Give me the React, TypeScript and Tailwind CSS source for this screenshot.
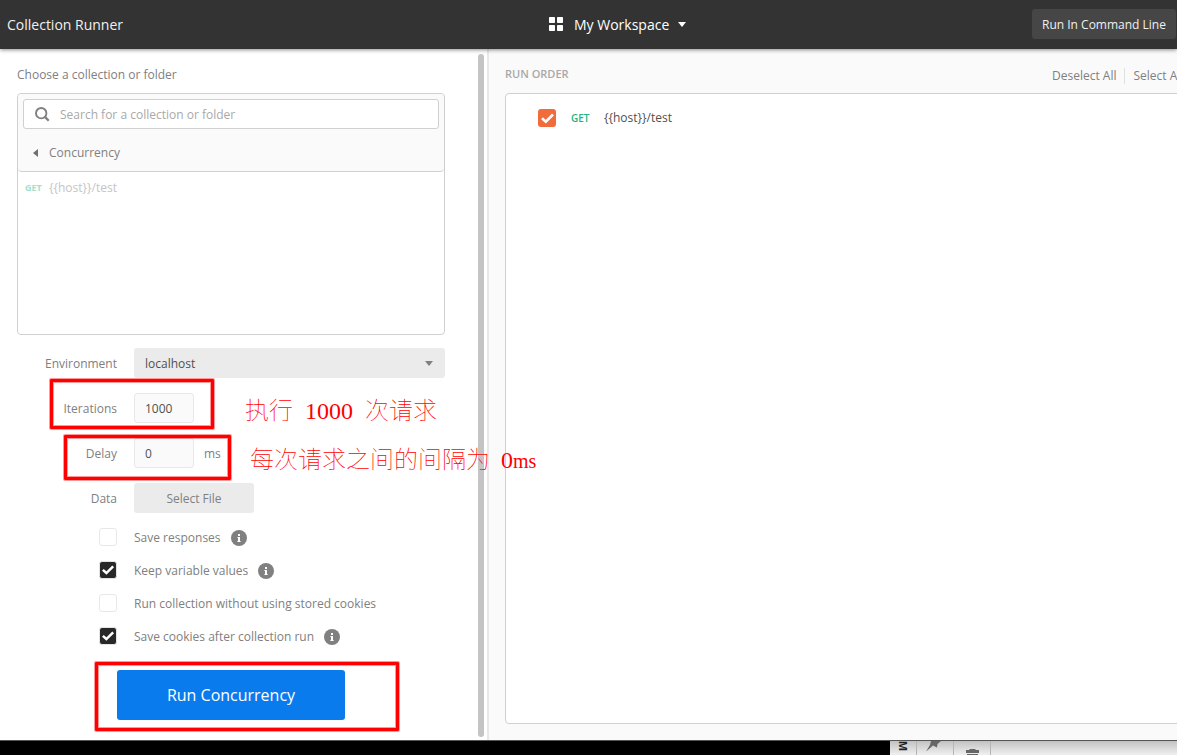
import React from "react";

function Check({ className }: { className: string }) {
  return (
    <svg viewBox="0 0 18 18" className={className} fill="none" stroke="currentColor" strokeWidth="2.8">
      <path d="M3.2 8.8 L7.2 12.4 L14.8 4.8" />
    </svg>
  );
}

function Info() {
  return (
    <svg viewBox="0 0 16 16" className="h-4 w-4 shrink-0">
      <circle cx="8" cy="8" r="8" fill="#808080" />
      <path d="M7 4h2v2H7zM6.4 7H9v4h.6v1H6.4v-1H7V8h-.6z" fill="#fff" />
    </svg>
  );
}

function Field({ label, children }: { label: string; children: React.ReactNode }) {
  return (
    <div className="flex h-[30px] items-center">
      <div className="mr-[17px] w-[100px] pt-[2px] text-right">{label}</div>
      {children}
    </div>
  );
}

function Option({ label, checked, info }: { label: string; checked?: boolean; info?: boolean }) {
  return (
    <div className="flex h-[33px] items-center">
      {checked ? (
        <div className="mb-[2px] flex h-[18px] w-[18px] items-center justify-center rounded-[3px] border border-[#e4e4e4] bg-[#282828] text-white">
          <Check className="h-4 w-4 shrink-0" />
        </div>
      ) : (
        <div className="mb-[2px] h-[18px] w-[18px] rounded-[3px] border border-[#e8e8e8] bg-white" />
      )}
      <div className="mr-[10px] ml-[17px] pt-px">{label}</div>
      {info && <div className="pt-px"><Info /></div>}
    </div>
  );
}

function Header() {
  return (
    <header className="relative z-10 flex h-[49px] shrink-0 items-center bg-[#333] text-[#f0f0f0] shadow-[0_1px_4px_rgba(0,0,0,0.45)]">
      <div className="w-[549px] pl-[7px] text-[14px]">Collection Runner</div>
      <svg viewBox="0 0 14 14" className="mb-px h-[14px] w-[14px]" fill="#fff">
        <rect width="6" height="6" rx=".7" />
        <rect x="8" width="6" height="6" rx=".7" />
        <rect y="8" width="6" height="6" rx=".7" />
        <rect x="8" y="8" width="6" height="6" rx=".7" />
      </svg>
      <div className="ml-[11px] w-[96px] text-[14px] whitespace-nowrap text-white">My Workspace</div>
      <svg viewBox="0 0 8 5" className="ml-[8px] h-[5px] w-[8px]" fill="#fff">
        <path d="M0 0h8L4 5z" />
      </svg>
      <button className="mr-px mb-px ml-auto h-[30px] w-[144px] rounded-[3px] bg-[#464646] pt-[2px] text-[12px] whitespace-nowrap">
        Run In Command Line
      </button>
    </header>
  );
}

function SetupPanel() {
  return (
    <section className="flex w-[489px] shrink-0 border-r-2 border-[#e8e8e8] bg-white">
      <div className="w-[478px]">
        <div className="pt-[17px] pl-[17px] leading-[18px]">Choose a collection or folder</div>
        <div className="mt-[9px] ml-[17px] h-[242px] w-[428px] rounded-[4px] border border-[#d0d0d0] bg-white">
          <div className="h-[78px] rounded-[4px] border-b border-[#d0d0d0] bg-[#fafafa] px-[5px] pt-[5px]">
            <div className="flex h-[30px] items-center rounded-[3px] border border-[#d0d0d0] bg-white pl-[11px] text-[#a9a9a9]">
              <svg viewBox="0 0 15 15" className="h-[15px] w-[15px]" fill="none" stroke="#808080" strokeWidth="1.9">
                <circle cx="6.2" cy="6.2" r="5.2" />
                <path d="M9.9 9.9l3.8 3.8" strokeWidth="2.3" />
              </svg>
              <span className="ml-[10px] pt-[2px]">Search for a collection or folder</span>
            </div>
            <div className="mt-[9px] flex h-[30px] items-center pl-[10px]">
              <svg viewBox="0 0 5 8" className="h-2 w-[5px]" fill="#707070">
                <path d="M5 0v8L0 4z" />
              </svg>
              <span className="ml-[11px]">Concurrency</span>
            </div>
          </div>
          <div className="flex h-[32px] items-center pl-[7px] text-[#c5c5c5]">
            <span className="w-[24px] text-[9px] font-bold text-[#a0e2ca]">GET</span>
            <span>{"{{host}}/test"}</span>
          </div>
        </div>
        <div className="flex flex-col gap-[15px] pt-[13px] pl-[17px]">
          <Field label="Environment">
            <div className="flex h-[30px] w-[311px] items-center justify-between rounded-[3px] bg-[#ebebeb] pr-[12px] pl-[11px] text-[#505050]">
              <span className="pt-[2px]">localhost</span>
              <svg viewBox="0 0 8 5" className="h-[5px] w-[8px]" fill="#808080">
                <path d="M0 0h8L4 5z" />
              </svg>
            </div>
          </Field>
          <Field label="Iterations">
            <div className="flex h-[30px] w-[60px] items-center rounded-[3px] border border-[#e8e8e8] bg-[#fafafa] pt-[2px] pl-[10px] text-[#505050]">1000</div>
          </Field>
          <Field label="Delay">
            <div className="flex h-[30px] w-[60px] items-center rounded-[3px] border border-[#e8e8e8] bg-[#fafafa] pt-[2px] pl-[10px] text-[#505050]">0</div>
            <span className="ml-[10px] pt-[2px]">ms</span>
          </Field>
          <Field label="Data">
            <button className="h-[30px] w-[120px] rounded-[3px] bg-[#ebebeb] pt-[2px]">Select File</button>
          </Field>
        </div>
        <div className="pt-[8px] pl-[99px]">
          <Option label="Save responses" info />
          <Option label="Keep variable values" checked info />
          <Option label="Run collection without using stored cookies" />
          <Option label="Save cookies after collection run" checked info />
        </div>
        <button className="mt-[17px] ml-[117px] h-[50px] w-[228px] rounded-[3px] bg-[#097bed] text-[16px] text-white">
          Run Concurrency
        </button>
      </div>
      <div className="mt-[5px] h-[683px] w-[6px] rounded-full bg-[#c4c4c4]" />
    </section>
  );
}

function OrderPanel() {
  return (
    <section className="min-w-0 flex-1 overflow-hidden bg-[#fafafa] pl-4">
      <div className="flex h-[44px] w-[720px] items-center">
        <span className="w-[547px] pt-[6px] text-[11px] font-semibold text-[#a9a9a9]">RUN ORDER</span>
        <span className="pt-[9px]">Deselect All</span>
        <span className="mt-[9px] mr-[8px] ml-[8px] h-4 w-px bg-[#e0e0e0]" />
        <span className="pt-[9px]">Select All</span>
      </div>
      <div className="h-[631px] w-[720px] rounded-[4px] border border-[#d0d0d0] bg-white pt-[9px]">
        <div className="flex h-[30px] items-center pl-[32px]">
          <div className="flex h-[18px] w-[18px] items-center justify-center rounded-[3px] bg-[#f26b3a] text-white">
            <Check className="h-[17px] w-[17px]" />
          </div>
          <span className="ml-[15px] w-[33px] pt-px text-[10px] font-semibold text-[#26b47f]">GET</span>
          <span className="text-[#505050]">{"{{host}}/test"}</span>
        </div>
      </div>
    </section>
  );
}

function BackgroundStrip() {
  return (
    <footer className="flex h-[15px] shrink-0 overflow-hidden border-t border-[#555] bg-black">
      <div className="w-[890px]" />
      <div className="flex flex-1 bg-linear-to-b from-[#c2c2c2] to-[#f0f0f0]">
        <div className="flex w-[27px] items-start justify-center border-r border-[#b5b5b5]">
          <span className="rotate-90 text-[11px] leading-[10px] font-bold text-[#222]">M</span>
        </div>
        <div className="w-[37px] border-r border-[#b5b5b5]">
          <svg viewBox="0 0 36 14" className="h-[14px] w-9" fill="#666">
            <path d="M14 0H24L20.5 3 20 6.5 16 4.5 9 10.5 13 4z" />
          </svg>
        </div>
        <div className="w-[37px] border-r border-[#b5b5b5]">
          <svg viewBox="0 0 36 14" className="h-[14px] w-9" fill="#666">
            <path d="M12 9h3l1-1h5l1 1h3v3H12zM13 13h11v1H13z" />
          </svg>
        </div>
      </div>
    </footer>
  );
}

function Annotations() {
  const text = "absolute z-20 whitespace-pre font-['Liberation_Serif','Noto_Sans_CJK_SC',serif] text-[24px] leading-[30px] font-thin text-[#ff0000]";
  const box = "absolute rounded-[1px] border-3 border-[#ff0000] shadow-[0_0_0_1px_rgba(255,0,0,0.4),inset_0_0_0_1px_rgba(255,0,0,0.4)]";
  return (
    <>
      <div className={`${box} top-[379px] left-[50px] h-[50px] w-[164px]`} />
      <div className={`${box} top-[435px] left-[64px] h-[45px] w-[167px]`} />
      <div className={`${box} top-[662px] left-[95px] h-[69px] w-[304px]`} />
      <div className={`${text} top-[396px] left-[245px]`}>
        执行<span className="mx-[12px]">1000</span>次请求
      </div>
      <div className={`${text} top-[445px] left-[250px]`}>
        每次请求之间的间隔为<span className="ml-[11px]">0</span><span className="text-[20px]">ms</span>
      </div>
    </>
  );
}

export default function App() {
  return (
    <div className="relative flex h-[755px] w-[1177px] flex-col overflow-hidden font-['Open_Sans',sans-serif] text-[12px] text-[#808080]">
      <Header />
      <main className="flex h-[691px] shrink-0">
        <SetupPanel />
        <OrderPanel />
      </main>
      <BackgroundStrip />
      <Annotations />
    </div>
  );
}
